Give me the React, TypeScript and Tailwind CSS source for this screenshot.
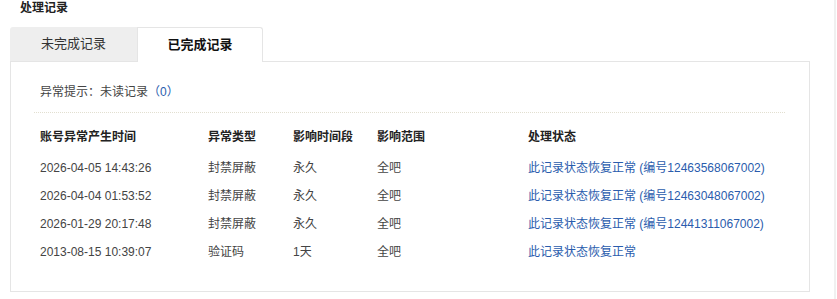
import React from "react";

const rows = [
  { time: "2026-04-05 14:43:26", type: "封禁屏蔽", span: "永久", scope: "全吧", status: "此记录状态恢复正常 (编号12463568067002)" },
  { time: "2026-04-04 01:53:52", type: "封禁屏蔽", span: "永久", scope: "全吧", status: "此记录状态恢复正常 (编号12463048067002)" },
  { time: "2026-01-29 20:17:48", type: "封禁屏蔽", span: "永久", scope: "全吧", status: "此记录状态恢复正常 (编号12441311067002)" },
  { time: "2013-08-15 10:39:07", type: "验证码", span: "1天", scope: "全吧", status: "此记录状态恢复正常" },
];

const App = () => {
  return (
    <div
      className="flex w-[837px] h-[299px] bg-white text-[12px] text-[#333]"
      style={{ fontFamily: '"Liberation Sans", "Noto Sans CJK SC", sans-serif' }}
    >
      <div className="w-[834px]">
        {/* Title */}
        <div className="h-[16px] pl-[20px] leading-[16px] font-bold text-[#222]">处理记录</div>

        {/* Tabs */}
        <div className="flex mt-[11px] ml-[10px]">
          <div className="w-[127px] h-[34px] leading-[34px] text-center bg-[#eeeeee] rounded-tl-[3px] text-[#333] text-[13px]">
            未完成记录
          </div>
          <div className="relative w-[126px] h-[35px] leading-[34px] text-center bg-white border border-b-0 border-[#e5e5e5] rounded-tr-[3px] font-bold text-[#111] text-[13px] -mb-px">
            已完成记录
          </div>
        </div>

        {/* Panel */}
        <div className="ml-[10px] w-[800px] h-[231px] border border-[#e5e5e5]">
          <div className="pl-[29px] pt-[20px] leading-[20px] text-[#444]">
            异常提示：未读记录<span className="text-[#2a5cad]">（0）</span>
          </div>
          <div className="ml-[23px] w-[751px] mt-[10px] border-t border-dotted border-[#e2dfd0]" />

          <div className="pl-[29px] mt-[10px]">
            <div className="flex h-[28px] items-center font-bold text-[#222] mb-[3px]">
              <div className="w-[168px]">账号异常产生时间</div>
              <div className="w-[85px]">异常类型</div>
              <div className="w-[84px]">影响时间段</div>
              <div className="w-[151px]">影响范围</div>
              <div>处理状态</div>
            </div>
            {rows.map((r) => (
              <div key={r.time} className="flex h-[28px] items-center text-[#444]">
                <div className="w-[168px]">{r.time}</div>
                <div className="w-[85px]">{r.type}</div>
                <div className="w-[84px]">{r.span}</div>
                <div className="w-[151px]">{r.scope}</div>
                <div className="text-[#2a5cad]">{r.status}</div>
              </div>
            ))}
          </div>
        </div>
      </div>
      <div className="w-[2px] h-full bg-[#f0f0f0]" />
    </div>
  );
};

export default App;
